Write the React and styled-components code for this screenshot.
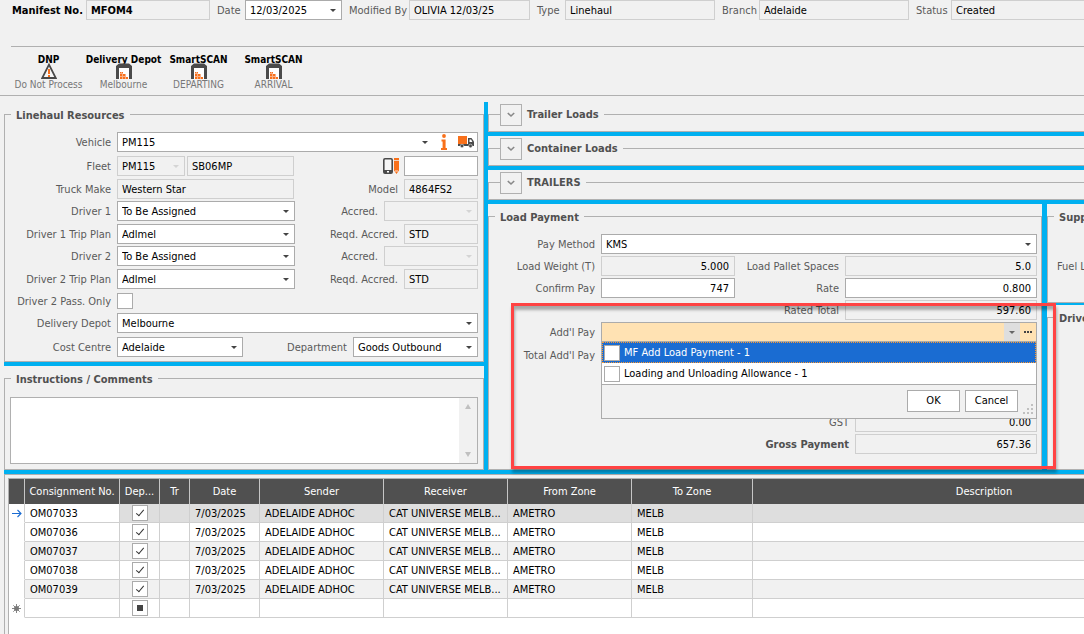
import React, { useId, useState } from 'react';
import styled, { createGlobalStyle, css } from 'styled-components';

const GlobalStyle = createGlobalStyle`
    *, *::before, *::after {
        box-sizing: border-box;
    }
    body {
        margin: 0;
        background: #f1f1f1;
        overflow: hidden;
    }
    body, input, select, textarea, button {
        font-family: 'DejaVu Sans Condensed', Tahoma, 'Noto Sans', sans-serif;
        font-size: 11px;
        line-height: 14px;
        color: #000;
    }
`;

const Page = styled.div`
    display: flex;
    flex-direction: column;
    height: 100vh;
    background: #f1f1f1;
`;

/* ---------- top fields ---------- */

const TopBar = styled.header`
    display: flex;
    gap: 7px;
    height: 46px;
    padding-left: 12px;
    overflow: hidden;
`;

const TopGroup = styled.div`
    display: flex;
    flex: 0 0 ${props => props.$width}px;
    justify-content: space-between;
    align-items: center;
    height: 20px;
`;

const Label = styled.label`
    padding-top: 1px;
    color: ${props => (props.$strong ? '#000' : '#5a5a5a')};
    font-weight: ${props => (props.$strong ? 'bold' : 'normal')};
    white-space: nowrap;
`;

const fieldBox = css`
    height: 20px;
    border: 1px solid ${props => (props.$locked ? '#cfcfcf' : '#ababab')};
    background: ${props => (props.$locked ? '#f1f1f1' : '#fff')};
    border-radius: 0;
    min-width: 0;
    width: ${props => (props.$width ? props.$width + 'px' : 'auto')};
    flex: ${props => (props.$width ? 'none' : '1')};
`;

const TextInput = styled.input`
    ${fieldBox}
    padding: 0 5px 0 4px;
    outline: none;
    text-align: ${props => (props.$right ? 'right' : 'left')};
    font-weight: ${props => (props.$strong ? 'bold' : 'normal')};
`;

const ComboBox = styled.div`
    ${fieldBox}
    display: flex;
    align-items: center;
`;

const Select = styled.select`
    appearance: none;
    flex: 1;
    min-width: 0;
    height: 18px;
    padding: 1px 12px 0 4px;
    border: 0;
    background: transparent;
    outline: none;
`;

const CaretSvg = styled.svg`
    flex: none;
    width: 6px;
    height: 3px;
    margin: 0 5px 0 -11px;
    fill: ${props => (props.$faded ? '#d4d4d4' : '#444')};
    pointer-events: none;
`;

const IconButton = styled.button`
    display: flex;
    align-items: center;
    justify-content: center;
    flex: none;
    width: ${props => props.$width || 20}px;
    height: 18px;
    padding: 0;
    border: 0;
    background: ${props => (props.$shaded ? '#dedede' : 'transparent')};
`;

/* ---------- status tiles ---------- */

const Tiles = styled.nav`
    display: flex;
    margin-left: 11px;
    height: 49px;
    padding-top: 6px;
    border-top: 1px solid #b0b0b0;
`;

const TileButton = styled.button`
    display: flex;
    flex-direction: column;
    align-items: center;
    width: 75px;
    padding: 0;
    border: 0;
    background: transparent;
    color: #777;
    font-size: 10px;
    white-space: nowrap;

    strong {
        color: #000;
        height: 10px;
    }
    svg {
        flex: none;
        width: 16px;
        height: 16px;
    }
    span {
        line-height: 12px;
    }
`;

const Divider = styled.hr`
    width: 100%;
    height: 1px;
    margin: 0 0 6px;
    border: 0;
    background: #b0b0b0;
`;

/* ---------- panels ---------- */

const Workspace = styled.main`
    display: grid;
    grid-template-columns: 480px minmax(0, 1fr);
    gap: 4px;
    margin-left: 4px;
    padding-bottom: 4px;
    background: #00b0f0;
`;

const Stack = styled.div`
    display: flex;
    flex-direction: column;
    gap: ${props => props.$gap || 4}px;
    min-width: 0;
`;

const PaymentArea = styled.div`
    display: grid;
    grid-template-columns: minmax(0, 1fr) 37px;
    gap: 5px;
    flex: 1;
`;

const Panel = styled.section`
    position: relative;
    display: flex;
    flex: ${props => (props.$height ? `0 0 ${props.$height}px` : '1')};
    min-width: 0;
    background: #f1f1f1;
`;

const ClippedPanel = styled(Panel)`
    overflow: hidden;
`;

const Fieldset = styled.fieldset`
    flex: 1;
    min-width: 0;
    margin: 0;
    padding: 0;
    border: 1px solid #b0b0b0;
    border-right-width: ${props => (props.$open ? 0 : 1)}px;
`;

const Legend = styled.legend`
    display: flex;
    align-items: center;
    gap: 5px;
    height: 25px;
    margin-left: ${props => (props.$collapsed ? 11 : 6)}px;
    padding: ${props => (props.$collapsed ? '0 5px 0 0' : '2px 5px 0')};
    color: #505050;
    font-weight: bold;
    white-space: nowrap;
`;

const ExpandButton = styled.button`
    display: flex;
    align-items: center;
    justify-content: center;
    width: 22px;
    height: 22px;
    padding: 0;
    border: 1px solid #b0b0b0;
    background: #f1f1f1;
`;

const Form = styled.div`
    display: grid;
    grid-template-rows: ${props => props.$rows};
    padding: 5px 5px 4px 0;
`;

const PaymentForm = styled(Form)`
    padding-right: 4px;
`;

const Row = styled.div`
    display: flex;
    align-items: center;
    height: ${props => (props.$short ? 16 : 20)}px;
    gap: 6px;
`;

const RowLabel = styled(Label)`
    flex: 0 0 106px;
    text-align: right;
`;

const SideLabel = styled(Label)`
    margin-left: auto;
    color: ${props => (props.$strong ? '#505050' : '#5a5a5a')};
`;

const InsetLabel = styled(Label)`
    margin-left: 9px;
`;

const PairedFields = styled.div`
    display: flex;
    gap: 2px;
`;

const PushedIcon = styled(IconButton)`
    margin-left: auto;
    margin-right: -3px;
`;

const CheckBox = styled.input`
    appearance: none;
    display: grid;
    place-items: center;
    flex: none;
    width: 16px;
    height: 16px;
    margin: 0;
    border: 1px solid #ababab;
    background: #fff;

    &:checked::before {
        content: '';
        width: 4px;
        height: 8px;
        margin-top: -2px;
        border: solid #333;
        border-width: 0 1px 1px 0;
        transform: rotate(40deg);
    }
    &:indeterminate::before {
        content: '';
        width: 6px;
        height: 6px;
        background: #444;
    }
`;

const Notes = styled.div`
    display: flex;
    height: 67px;
    margin: 6px 5px 5px;
    border: 1px solid #b0b0b0;
    background: #fff;

    textarea {
        flex: 1;
        border: 0;
        outline: none;
        resize: none;
        overflow: hidden;
    }
`;

const ScrollTrack = styled.div`
    display: flex;
    flex-direction: column;
    justify-content: space-between;
    align-items: center;
    width: 18px;
    padding: 6px 0;
    background: #f1f1f1;

    svg {
        width: 6px;
        height: 5px;
        fill: #c0c0c0;
    }
`;

/* ---------- pay type picker ---------- */

const Picker = styled.div`
    position: relative;
    display: flex;
    flex: 1;
    min-width: 0;
    height: 20px;
    border: 1px solid #ababab;
    background: #ffe2b3;

    > input {
        flex: 1;
        min-width: 0;
        padding: 0 4px;
        border: 0;
        outline: none;
        background: transparent;
    }
`;

const Popup = styled.div`
    position: absolute;
    top: 18px;
    left: -1px;
    right: -1px;
    z-index: 2;
    border: 1px solid #ababab;
    background: #f1f1f1;
`;

const Options = styled.ul`
    margin: 0;
    padding: 0;
    list-style: none;
    background: #fff;
    border-bottom: 1px solid #ababab;
`;

const Option = styled.li`
    border: 1px dotted ${props => (props.$active ? '#ff9a2e' : '#fff')};
    background: ${props => (props.$active ? '#1a6cd2' : '#fff')};

    label {
        display: flex;
        align-items: center;
        gap: 4px;
        height: 19px;
        padding-left: 1px;
        color: ${props => (props.$active ? '#fff' : '#000')};
    }
`;

const PopupFooter = styled.div`
    display: flex;
    justify-content: flex-end;
    gap: 5px;
    height: 33px;
    padding: 5px 3px 0 0;

    svg {
        width: 10px;
        height: 10px;
        margin-top: 14px;
        fill: #c0c0c0;
    }
`;

const PushButton = styled.button`
    width: 53px;
    height: 22px;
    padding: 0;
    border: 1px solid #ababab;
    background: #fff;
`;

// red frame around the additional pay block
const Highlight = styled.div`
    position: absolute;
    top: 99px;
    right: -14px;
    bottom: 1px;
    left: 23px;
    z-index: 3;
    border: 3px solid #ff4343;
    box-shadow: 1px 4px 3px rgba(0, 0, 0, 0.3), inset 1px 4px 3px rgba(0, 0, 0, 0.3);
    pointer-events: none;
`;

/* ---------- consignment grid ---------- */

const GridFrame = styled.section`
    flex: 1;
    min-height: 0;
    margin-left: 4px;
    padding: 3px 0 0 3px;
    border: solid #b0b0b0;
    border-width: 1px 0 0 1px;
`;

const GridBody = styled.div`
    height: 100%;
    overflow: hidden;
    border: solid #b0b0b0;
    border-width: 1px 0 0 1px;
    background: #fff;
`;

const Table = styled.table`
    table-layout: fixed;
    width: 1207px;
    border-collapse: separate;
    border-spacing: 0;

    th {
        height: 25px;
        padding: 0 3px;
        border-right: 1px solid #c6c6c6;
        background: #505050;
        color: #fff;
        font-weight: normal;
        white-space: nowrap;
    }
`;

const Cell = styled.td`
    height: 19px;
    padding: 1px 0 0 5px;
    border-right: 1px solid #cfcfcf;
    border-bottom: 1px solid #cfcfcf;
    background: ${props => props.$fill || 'transparent'};
    white-space: nowrap;
`;

const CheckCell = styled(Cell)`
    padding: 0;

    input {
        margin: 0 auto;
    }
`;

const MarkerCell = styled(Cell)`
    padding: 0;
    border-bottom-color: transparent;

    svg {
        display: block;
        margin: 0 auto;
    }
`;

/* ---------- icons ---------- */

const Caret = ({ faded }) => (
    <CaretSvg viewBox="0 0 6 3" $faded={faded} aria-hidden="true">
        <path d="M0 0h6L3 3z" />
    </CaretSvg>
);

const WarningIcon = () => (
    <svg viewBox="0 0 16 16" aria-hidden="true">
        <path d="M8 1.6L14.8 15H1.2z" fill="#f7f7f7" stroke="#4a4a4a" strokeWidth="1.8" />
        <path d="M7 6h2v5H7zM7 12h2v2H7z" fill="#f8701a" />
    </svg>
);

const DepotIcon = () => (
    <svg viewBox="0 0 16 16" aria-hidden="true">
        <path d="M0 16V3L3 0.5h10L16 3v13h-3V5H3v11z" fill="#4a4a4a" />
        <path d="M3 5h10v11H3z" fill="#fff" />
        <path d="M4 9h3v2h3v3h2v2H4z" fill="#f8b088" />
        <path
            d="M4 9h1v1H4zM6 9h1v1H6zM4 11h2v2H4zM7 11h2v2H7zM4 14h2v2H4zM7 14h2v2H7zM10 14h2v2h-2z"
            fill="#f8701a"
        />
    </svg>
);

const InfoIcon = () => (
    <svg width="6" height="16" viewBox="0 0 6 16" aria-hidden="true">
        <circle cx="3" cy="2" r="1.9" fill="#f8701a" />
        <path d="M0.5 5.5H4.6V14H6v2H0v-2h1.6V7.5H0.5z" fill="#f8701a" />
    </svg>
);

const TruckIcon = () => (
    <svg width="16" height="12" viewBox="0 0 16 12" aria-hidden="true">
        <path d="M0 8h16v2H0z" fill="#4a4a4a" />
        <path d="M0 0h9v8H0z" fill="#f8701a" />
        <path d="M10 2h3.5L16 5.5V10h-6z" fill="#4a4a4a" />
        <path d="M11.5 3.5h1.6L14.4 6h-2.9z" fill="#fff" />
        <circle cx="4" cy="10" r="1.8" fill="#4a4a4a" stroke="#fff" strokeWidth="0.5" />
        <circle cx="12.5" cy="10" r="1.8" fill="#4a4a4a" stroke="#fff" strokeWidth="0.5" />
    </svg>
);

const PhoneEditIcon = () => (
    <svg width="16" height="16" viewBox="0 0 16 16" aria-hidden="true">
        <rect x="0.8" y="0.8" width="8.4" height="14.4" rx="1.2" fill="#f7f7f7" stroke="#4a4a4a" strokeWidth="1.6" />
        <path d="M1 12h8v3H1z" fill="#4a4a4a" />
        <path d="M4 13h2v1.4H4z" fill="#fff" />
        <path d="M11 0h5v2.2h-5zM11 3h5v9.5L13.5 16 11 12.5z" fill="#f8701a" />
        <path d="M12 13h3" stroke="#fff" strokeWidth="0.8" />
    </svg>
);

const ChevronIcon = () => (
    <svg width="8" height="6" viewBox="0 0 8 6" aria-hidden="true">
        <path d="M0.8 1L4 4L7.2 1" fill="none" stroke="#888" strokeWidth="1.6" />
    </svg>
);

const ArrowIcon = () => (
    <svg width="10" height="9" viewBox="0 0 10 9" aria-hidden="true">
        <path d="M0 4.5h9M5.5 1L9 4.5L5.5 8" fill="none" stroke="#1a6cd2" strokeWidth="1.1" />
    </svg>
);

const NewRowIcon = () => (
    <svg width="9" height="9" viewBox="0 0 9 9" aria-hidden="true">
        <circle cx="4.5" cy="4.5" r="2.5" fill="#777" />
        <path d="M4.5 0v9M0 4.5h9M1.3 1.3l6.4 6.4M7.7 1.3L1.3 7.7" stroke="#777" strokeWidth="0.9" />
    </svg>
);

/* ---------- building blocks ---------- */

function Combo({ id, value, width, locked, children }) {
    return (
        <ComboBox $width={width} $locked={locked}>
            <Select id={id} defaultValue={value}>
                <option>{value}</option>
            </Select>
            <Caret faded={locked} />
            {children}
        </ComboBox>
    );
}

function TopField({ label, value, groupWidth, width, strong, combo }) {
    const id = useId();
    return (
        <TopGroup $width={groupWidth}>
            <Label htmlFor={id} $strong={strong}>{label}</Label>
            {combo
                ? <Combo id={id} value={value} width={width} />
                : <TextInput id={id} defaultValue={value} $width={width} $locked $strong={strong} readOnly />}
        </TopGroup>
    );
}

function SideField({ label, value, width, combo, locked = true, right, strong }) {
    const id = useId();
    return (
        <>
            <SideLabel htmlFor={id} $strong={strong}>{label}</SideLabel>
            {combo
                ? <Combo id={id} value={value} width={width} locked={locked} />
                : <TextInput id={id} defaultValue={value} $width={width} $locked={locked} $right={right} />}
        </>
    );
}

function FormRow({ label, value, width, combo, locked, right, children }) {
    const id = useId();
    return (
        <Row>
            <RowLabel htmlFor={id}>{label}</RowLabel>
            {combo
                ? <Combo id={id} value={value} width={width} locked={locked} />
                : <TextInput id={id} defaultValue={value} $width={width} $locked={locked} $right={right} />}
            {children}
        </Row>
    );
}

function Tile({ title, text, icon }) {
    return (
        <TileButton type="button">
            <strong>{title}</strong>
            {icon}
            <span>{text}</span>
        </TileButton>
    );
}

function CollapsedPanel({ title }) {
    return (
        <Panel $height={30}>
            <Fieldset $open>
                <Legend $collapsed>
                    <ExpandButton type="button" aria-label={`Expand ${title}`}>
                        <ChevronIcon />
                    </ExpandButton>
                    {title}
                </Legend>
            </Fieldset>
        </Panel>
    );
}

function LinehaulResources() {
    return (
        <Panel $height={260}>
            <Fieldset>
                <Legend>Linehaul Resources</Legend>
                <Form $rows="24px 23px 22px 23px 22px 23px 24px 20px 24px 20px">
                    <Row>
                        <RowLabel htmlFor="vehicle">Vehicle</RowLabel>
                        <Combo id="vehicle" value="PM115">
                            <IconButton type="button" aria-label="Vehicle details" $width={22}><InfoIcon /></IconButton>
                            <IconButton type="button" aria-label="Find vehicle" $width={22}><TruckIcon /></IconButton>
                        </Combo>
                    </Row>
                    <Row>
                        <RowLabel htmlFor="fleet">Fleet</RowLabel>
                        <PairedFields>
                            <Combo id="fleet" value="PM115" width={68} locked />
                            <TextInput aria-label="Registration" defaultValue="SB06MP" $width={107} $locked />
                        </PairedFields>
                        <PushedIcon type="button" aria-label="Edit phone"><PhoneEditIcon /></PushedIcon>
                        <TextInput aria-label="Phone" $width={74} />
                    </Row>
                    <FormRow label="Truck Make" value="Western Star" width={177} locked>
                        <SideField label="Model" value="4864FS2" width={74} />
                    </FormRow>
                    <FormRow label="Driver 1" value="To Be Assigned" width={178} combo>
                        <SideField label="Accred." value="" width={94} combo />
                    </FormRow>
                    <FormRow label="Driver 1 Trip Plan" value="Adlmel" width={178} combo>
                        <SideField label="Reqd. Accred." value="STD" width={74} />
                    </FormRow>
                    <FormRow label="Driver 2" value="To Be Assigned" width={178} combo>
                        <SideField label="Accred." value="" width={94} combo />
                    </FormRow>
                    <FormRow label="Driver 2 Trip Plan" value="Adlmel" width={178} combo>
                        <SideField label="Reqd. Accred." value="STD" width={74} />
                    </FormRow>
                    <Row $short>
                        <RowLabel htmlFor="passenger">Driver 2 Pass. Only</RowLabel>
                        <CheckBox id="passenger" type="checkbox" />
                    </Row>
                    <FormRow label="Delivery Depot" value="Melbourne" combo />
                    <FormRow label="Cost Centre" value="Adelaide" width={126} combo>
                        <SideField label="Department" value="Goods Outbound" width={125} locked={false} combo />
                    </FormRow>
                </Form>
            </Fieldset>
        </Panel>
    );
}

function Instructions() {
    return (
        <Panel $height={104}>
            <Fieldset>
                <Legend>Instructions / Comments</Legend>
                <Notes>
                    <textarea aria-label="Instructions / Comments" />
                    <ScrollTrack>
                        <svg viewBox="0 0 6 5"><path d="M0 5h6L3 0z" /></svg>
                        <svg viewBox="0 0 6 5"><path d="M0 0h6L3 5z" /></svg>
                    </ScrollTrack>
                </Notes>
            </Fieldset>
        </Panel>
    );
}

const payTypes = ['MF Add Load Payment - 1', 'Loading and Unloading Allowance - 1'];

function PayPicker() {
    const [active, setActive] = useState(0);
    return (
        <Picker>
            <input id="addl-pay" type="text" />
            <IconButton type="button" aria-label="Open list" $width={16} $shaded>
                <svg width="6" height="3" viewBox="0 0 6 3"><path d="M0 0h6L3 3z" fill="#666" /></svg>
            </IconButton>
            <IconButton type="button" aria-label="More" $width={16}>
                <svg width="8" height="2" viewBox="0 0 8 2"><path d="M0 0h2v2H0zM3 0h2v2H3zM6 0h2v2H6z" fill="#444" /></svg>
            </IconButton>
            <Popup>
                <Options>
                    {payTypes.map((item, i) => (
                        <Option key={item} $active={i === active} onMouseEnter={() => setActive(i)}>
                            <label>
                                <CheckBox type="checkbox" />
                                {item}
                            </label>
                        </Option>
                    ))}
                </Options>
                <PopupFooter>
                    <PushButton type="button">OK</PushButton>
                    <PushButton type="button">Cancel</PushButton>
                    <svg viewBox="0 0 10 10" aria-hidden="true">
                        <path d="M8 0h2v2H8zM4 4h2v2H4zM8 4h2v2H8zM0 8h2v2H0zM4 8h2v2H4zM8 8h2v2H8z" />
                    </svg>
                </PopupFooter>
            </Popup>
        </Picker>
    );
}

function LoadPayment() {
    return (
        <Panel>
            <Fieldset>
                <Legend>Load Payment</Legend>
                <PaymentForm $rows="22px 22px 22px 22px 23px 67px 22px 20px">
                    <FormRow label="Pay Method" value="KMS" combo />
                    <FormRow label="Load Weight (T)" value="5.000" width={134} locked right>
                        <SideField label="Load Pallet Spaces" value="5.0" width={192} right />
                    </FormRow>
                    <FormRow label="Confirm Pay" value="747" width={134} right>
                        <SideField label="Rate" value="0.800" width={192} locked={false} right />
                    </FormRow>
                    <Row>
                        <SideField label="Rated Total" value="597.60" width={192} right />
                    </Row>
                    <Row>
                        <RowLabel htmlFor="addl-pay">Add'l Pay</RowLabel>
                        <PayPicker />
                    </Row>
                    <FormRow label="Total Add'l Pay" value="" locked />
                    <Row>
                        <SideField label="GST" value="0.00" width={182} right />
                    </Row>
                    <Row>
                        <SideField label="Gross Payment" value="657.36" width={182} right strong />
                    </Row>
                </PaymentForm>
            </Fieldset>
            <Highlight />
        </Panel>
    );
}

const columns = [
    { title: '', width: 16 },
    { title: 'Consignment No.', width: 95 },
    { title: 'Dep...', width: 40 },
    { title: 'Tr', width: 30 },
    { title: 'Date', width: 70 },
    { title: 'Sender', width: 124 },
    { title: 'Receiver', width: 124 },
    { title: 'From Zone', width: 124 },
    { title: 'To Zone', width: 121 },
    { title: 'Description', width: 463 },
];

const consignments = ['OM07033', 'OM07036', 'OM07037', 'OM07038', 'OM07039'];

function Consignments() {
    return (
        <GridFrame>
            <GridBody>
                <Table>
                    <colgroup>
                        {columns.map(col => <col key={col.title} width={col.width} />)}
                    </colgroup>
                    <thead>
                        <tr>
                            {columns.map(col => <th key={col.title} scope="col">{col.title}</th>)}
                        </tr>
                    </thead>
                    <tbody>
                        {consignments.map((number, i) => {
                            const fill = i === 0 ? '#dedede' : i % 2 ? '#fff' : '#f1f1f1';
                            return (
                                <tr key={number}>
                                    <MarkerCell>{i === 0 && <ArrowIcon />}</MarkerCell>
                                    <Cell $fill={i === 0 ? '#fff' : fill}>{number}</Cell>
                                    <CheckCell $fill={fill}>
                                        <CheckBox type="checkbox" aria-label={`Depot ${number}`} defaultChecked />
                                    </CheckCell>
                                    <Cell $fill={fill} />
                                    <Cell $fill={fill}>7/03/2025</Cell>
                                    <Cell $fill={fill}>ADELAIDE ADHOC</Cell>
                                    <Cell $fill={fill}>CAT UNIVERSE MELB...</Cell>
                                    <Cell $fill={fill}>AMETRO</Cell>
                                    <Cell $fill={fill}>MELB</Cell>
                                    <Cell $fill={fill} />
                                </tr>
                            );
                        })}
                        <tr>
                            <MarkerCell><NewRowIcon /></MarkerCell>
                            <Cell />
                            <CheckCell>
                                <CheckBox
                                    type="checkbox"
                                    aria-label="Depot"
                                    ref={el => { if (el) el.indeterminate = true; }}
                                />
                            </CheckCell>
                            {columns.slice(3).map(col => <Cell key={col.title} />)}
                        </tr>
                    </tbody>
                </Table>
            </GridBody>
        </GridFrame>
    );
}

function App() {
    return (
        <>
            <GlobalStyle />
            <Page>
                <TopBar>
                    <TopField label="Manifest No." value="MFOM4" groupWidth={198} width={124} strong />
                    <TopField label="Date" value="12/03/2025" groupWidth={125} width={97} combo />
                    <TopField label="Modified By" value="OLIVIA 12/03/25" groupWidth={181} width={121} />
                    <TopField label="Type" value="Linehaul" groupWidth={178} width={150} />
                    <TopField label="Branch" value="Adelaide" groupWidth={187} width={150} />
                    <TopField label="Status" value="Created" groupWidth={185} width={150} />
                </TopBar>
                <Tiles>
                    <Tile title="DNP" text="Do Not Process" icon={<WarningIcon />} />
                    <Tile title="Delivery Depot" text="Melbourne" icon={<DepotIcon />} />
                    <Tile title="SmartSCAN" text="DEPARTING" icon={<DepotIcon />} />
                    <Tile title="SmartSCAN" text="ARRIVAL" icon={<DepotIcon />} />
                </Tiles>
                <Divider />
                <Workspace>
                    <Stack>
                        <LinehaulResources />
                        <Instructions />
                    </Stack>
                    <Stack>
                        <CollapsedPanel title="Trailer Loads" />
                        <CollapsedPanel title="Container Loads" />
                        <CollapsedPanel title="TRAILERS" />
                        <PaymentArea>
                            <LoadPayment />
                            <Stack $gap={2}>
                                <ClippedPanel $height={99}>
                                    <Fieldset $open>
                                        <Legend>Supplier</Legend>
                                        <Form $rows="22px 20px">
                                            <span />
                                            <Row>
                                                <InsetLabel as="span">Fuel Levy</InsetLabel>
                                            </Row>
                                        </Form>
                                    </Fieldset>
                                </ClippedPanel>
                                <ClippedPanel>
                                    <Fieldset $open>
                                        <Legend>Driver</Legend>
                                    </Fieldset>
                                </ClippedPanel>
                            </Stack>
                        </PaymentArea>
                    </Stack>
                </Workspace>
                <Consignments />
            </Page>
        </>
    );
}

export default App;
